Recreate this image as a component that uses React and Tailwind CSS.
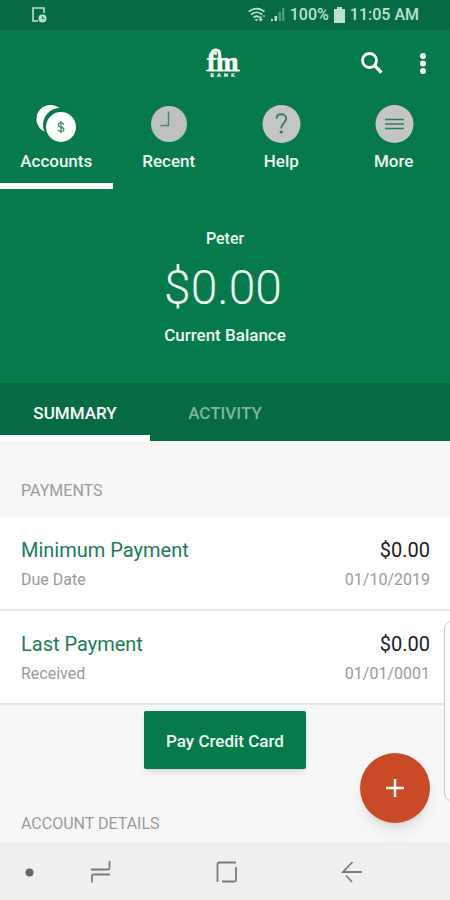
import React, { useState } from "react";

const AccountsIcon = () => (
  <svg width="42" height="40" viewBox="0 0 42 40" aria-hidden="true">
    <circle cx="15.500" cy="16" r="14" fill="#fff" />
    <circle cx="25" cy="22" r="17" fill="#067a4a" />
    <circle cx="26" cy="24" r="15" fill="#fff" />
    <path
      d="M28.800 21.500c-.4-1.100-1.400-1.600-2.800-1.600-1.600 0-2.700.8-2.700 2 0 3 5.600 1.600 5.600 4.400 0 1.300-1.200 2.100-2.900 2.100-1.500 0-2.600-.6-3-1.700M26 18v12"
      fill="none"
      stroke="#2a8a62"
      strokeWidth="1.200"
    />
  </svg>
);

const RecentIcon = () => (
  <svg width="42" height="40" viewBox="0 0 42 40" aria-hidden="true">
    <circle cx="21" cy="21" r="18" fill="#bfc1c0" />
    <path d="M20.500 8.500v14h-8" fill="none" stroke="#4a8a6c" strokeWidth="1.500" />
  </svg>
);

const HelpIcon = () => (
  <svg width="42" height="40" viewBox="0 0 42 40" aria-hidden="true">
    <circle cx="21.500" cy="21" r="19" fill="#c4c6c5" />
    <path
      d="M16.500 15.500c.2-2.800 2-4.300 4.800-4.300s4.900 1.700 4.900 4.300c0 4.200-5 4.700-5 10"
      fill="none"
      stroke="#2f7f5b"
      strokeWidth="1.900"
    />
    <circle cx="21.200" cy="29" r="1.600" fill="#2f7f5b" />
  </svg>
);

const MoreIcon = () => (
  <svg width="42" height="40" viewBox="0 0 42 40" aria-hidden="true">
    <circle cx="21.500" cy="21" r="19" fill="#c4c6c5" />
    <path d="M12 16.500h19M12 21h19M12 25.500h19" stroke="#2f7f5b" strokeWidth="1.500" />
  </svg>
);

const navItems = [
  { label: "Accounts", icon: AccountsIcon },
  { label: "Recent", icon: RecentIcon },
  { label: "Help", icon: HelpIcon },
  { label: "More", icon: MoreIcon },
];

const payments = [
  { title: "Minimum Payment", note: "Due Date", amount: "$0.00", date: "01/10/2019" },
  { title: "Last Payment", note: "Received", amount: "$0.00", date: "01/01/0001" },
];

const StatusBar = () => (
  <div className="flex h-[30px] items-center justify-between bg-[#066b42] pr-[31px] pl-8 text-[#bfe0cf]">
    <svg width="15" height="16" viewBox="0 0 15 16" aria-hidden="true">
      <path d="M12 6V1H1v13h5" fill="none" stroke="currentColor" strokeWidth="1.600" />
      <circle cx="10.500" cy="11.500" r="4" fill="currentColor" />
      <path d="M10.500 9.500v2.200h2" fill="none" stroke="#066b42" />
    </svg>
    <div className="flex items-center">
      <svg width="18" height="16" viewBox="0 0 18 16" className="mr-1" aria-hidden="true">
        <g fill="none" stroke="currentColor" strokeWidth="1.800">
          <path d="M.8 4.700c4.600-4.200 11-4.200 15.600 0M3 7.700c3.400-3.100 7.800-3.100 11.200 0M5.400 10.600c2-1.700 4.300-1.700 6.200 0" />
        </g>
        <path d="M6.500 12l2 2.200 1.500-2.200zM10.500 12h1.300V9.500h1.800V12h1.300l-2.200 2.800zM14.800 8.500h2.400L16 10.500z" fill="currentColor" />
      </svg>
      <svg width="16" height="16" viewBox="0 0 16 16" className="mr-1" aria-hidden="true">
        <path d="M1 12h2v2H1zM4.500 9h2.500v5h-2.500z" fill="currentColor" />
        <path d="M8.500 5H11v9H8.500zM12 1h2.500v13H12z" fill="currentColor" opacity=".4" />
      </svg>
      <span className="text-base leading-none font-medium">100%</span>
      <svg width="13" height="16" viewBox="0 0 13 16" className="mx-1" aria-hidden="true">
        <path d="M4 0h5v2h3v14H1V2h3z" fill="currentColor" />
      </svg>
      <span className="text-base leading-none font-medium">11:05 AM</span>
    </div>
  </div>
);

const Logo = () => (
  <svg width="34" height="30" viewBox="0 0 34 30" role="img" aria-label="fm Bank">
    <text
      x="1"
      y="23"
      fill="#fff"
      stroke="#fff"
      strokeWidth=".6"
      fontSize="27"
      fontWeight="700"
      fontFamily="'Liberation Serif', serif"
    >
      fm
    </text>
    <path d="M5.500 8C5.500 4 7 2 9.700 2s4 1.800 4 4.500V22" fill="none" stroke="#fff" strokeWidth="3.200" />
    <path d="M0 22.500h34" stroke="#fff" strokeWidth="1.600" />
    <text
      x="18"
      y="29"
      textAnchor="middle"
      fill="#fff"
      fontSize="5"
      letterSpacing="3"
      fontWeight="700"
      fontFamily="'DejaVu Sans', sans-serif"
    >
      BANK
    </text>
  </svg>
);

const AppBar = () => (
  <div className="grid h-[65px] grid-cols-3 items-center">
    <div />
    <div className="flex justify-center pr-1">
      <Logo />
    </div>
    <div className="flex items-center justify-end pr-[23px]">
      <button type="button" aria-label="Search" className="mr-[35px]">
        <svg width="24" height="24" viewBox="0 0 24 24" aria-hidden="true">
          <circle cx="9.500" cy="9.500" r="7" fill="none" stroke="#fff" strokeWidth="2.800" />
          <path d="M14.500 14.500l7 7" stroke="#fff" strokeWidth="3.200" />
        </svg>
      </button>
      <button type="button" aria-label="More options">
        <svg width="8" height="24" viewBox="0 0 8 24" fill="#fff" aria-hidden="true">
          <circle cx="4" cy="5" r="3" />
          <circle cx="4" cy="12.500" r="3" />
          <circle cx="4" cy="20" r="3" />
        </svg>
      </button>
    </div>
  </div>
);

const MainNav = ({ active, onSelect }) => (
  <nav className="grid grid-cols-4">
    {navItems.map(({ label, icon: Icon }) => (
      <button
        key={label}
        type="button"
        onClick={() => onSelect(label)}
        className={`flex h-[94px] flex-col items-center border-b-6 pt-2 text-[17px] leading-6 font-medium ${
          active === label ? "border-white" : "border-transparent"
        }`}
      >
        <Icon />
        <span className="mt-[6px]">{label}</span>
      </button>
    ))}
  </nav>
);

const SectionTitle = ({ children }) => (
  <h2 className="text-base leading-6 text-[#999b9a]">{children}</h2>
);

const PaymentRow = ({ title, note, amount, date }) => (
  <li className="flex h-[94px] items-center justify-between border-b-2 border-[#e6e8e7] bg-white pt-1 pr-5 pl-[21px]">
    <div>
      <div className="text-xl leading-[30px] text-[#197d55]">{title}</div>
      <div className="text-base leading-[30px] text-[#9a9a9a]">{note}</div>
    </div>
    <div className="text-right">
      <div className="text-xl leading-[30px] text-[#1c1c1c]">{amount}</div>
      <div className="text-base leading-[30px] text-[#9a9a9a]">{date}</div>
    </div>
  </li>
);

const SystemNav = () => (
  <div className="flex h-[58px] items-center bg-[#efefef] pt-[2px] pr-[87px] pl-[25px] text-[#7b7b7b]">
    <svg width="9" height="9" viewBox="0 0 9 9" aria-hidden="true">
      <circle cx="4.500" cy="4.500" r="4" fill="#666" />
    </svg>
    <div className="ml-14 flex flex-1 items-center justify-between">
      <button type="button" aria-label="Recent apps">
        <svg width="22" height="22" viewBox="0 0 22 22" fill="none" stroke="currentColor" strokeWidth="1.800" aria-hidden="true">
          <path d="M1 8.500h17q1.500 0 1.500-1.500V0M20 13.500H3.500Q2 13.500 2 15v6.500" />
        </svg>
      </button>
      <button type="button" aria-label="Home">
        <svg width="22" height="22" viewBox="0 0 22 22" fill="none" stroke="currentColor" strokeWidth="1.800" aria-hidden="true">
          <path d="M20 1.500H3.500Q1.500 1.500 1.500 3.500V21M6 20.500h12.500q1.500 0 1.500-1.500V6" />
        </svg>
      </button>
      <button type="button" aria-label="Back">
        <svg width="22" height="22" viewBox="0 0 22 22" fill="none" stroke="currentColor" strokeWidth="1.800" aria-hidden="true">
          <path d="M11.500 1L2 11h19M5 14.500l6 6.500" />
        </svg>
      </button>
    </div>
  </div>
);

const App = () => {
  const [active, setActive] = useState("Accounts");
  const [tab, setTab] = useState("SUMMARY");

  return (
    <div className="relative flex min-h-screen flex-col overflow-hidden bg-[#f7f7f7] font-['Roboto',sans-serif]">
      <StatusBar />
      <header className="bg-[#067a4a] text-[#f0faf5]">
        <AppBar />
        <MainNav active={active} onSelect={setActive} />
        <div className="flex h-[194px] flex-col items-center pt-[38px]">
          <p className="text-base leading-6 font-medium">Peter</p>
          <p className="mt-1 pr-1 text-5xl leading-[66px] font-light">$0.00</p>
          <p className="mt-[2px] text-[17px] leading-6 font-medium">Current Balance</p>
        </div>
      </header>

      <div role="tablist" className="grid h-[58px] grid-cols-3 bg-[#066b42]">
        {["SUMMARY", "ACTIVITY"].map((name) => (
          <button
            key={name}
            type="button"
            role="tab"
            aria-selected={tab === name}
            onClick={() => setTab(name)}
            className={`border-b-6 pt-[10px] text-[17px] font-medium ${
              tab === name ? "border-white text-white" : "border-transparent text-[#7db89b]"
            }`}
          >
            {name}
          </button>
        ))}
      </div>

      <main className="flex-1">
        <div className="pt-[38px] pb-[14px] pl-[21px]">
          <SectionTitle>PAYMENTS</SectionTitle>
        </div>
        <ul>
          {payments.map((payment) => (
            <PaymentRow key={payment.title} {...payment} />
          ))}
        </ul>
        <div className="flex justify-center pt-[6px]">
          <button
            type="button"
            className="h-[58px] rounded-xs bg-[#067a4a] px-[22px] pt-1 text-[17px] font-medium text-[#f0faf5] shadow-md"
          >
            Pay Credit Card
          </button>
        </div>
        <div className="pt-[43px] pl-[21px]">
          <SectionTitle>ACCOUNT DETAILS</SectionTitle>
        </div>
      </main>

      <SystemNav />

      <div className="absolute -right-3 bottom-[99px] h-[180px] w-[18px] rounded-lg border border-[#c8cac9] bg-white/90" />
      <button
        type="button"
        aria-label="Add"
        className="absolute right-5 bottom-[77px] flex size-[70px] items-center justify-center rounded-full bg-[#c94a26] shadow-lg"
      >
        <svg width="20" height="20" viewBox="0 0 20 20" aria-hidden="true">
          <path d="M10 1v18M1 10h18" stroke="#fff" strokeWidth="2.500" />
        </svg>
      </button>
    </div>
  );
};

export default App;
